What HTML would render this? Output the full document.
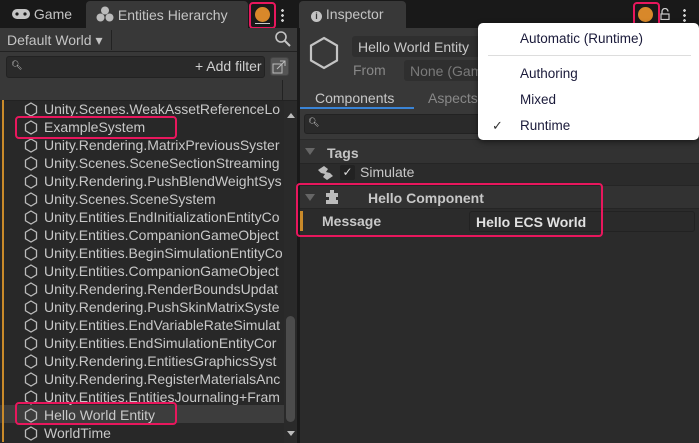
<!DOCTYPE html>
<html><head><meta charset="utf-8"><style>
*{box-sizing:border-box;margin:0;padding:0}
body{width:699px;height:443px;background:#191919;font-family:"Liberation Sans",sans-serif;position:relative;overflow:hidden;color:#c4c4c4;font-size:13px}
.a{position:absolute}
.row{position:absolute;left:0;width:284px;height:18px;line-height:18px;font-size:14px;color:#c8c8c8;white-space:nowrap;overflow:hidden}
.row .bar{position:absolute;left:2px;top:0;width:2px;height:18px;background:#c98a2a}
.row svg{position:absolute;left:24px;top:2px}
.row span{position:absolute;left:44px}
.red{position:absolute;border:2px solid #e8175d;border-radius:4px}
</style></head><body>
<!-- tab bar -->
<div class="a" style="left:0;top:0;width:699px;height:28px;background:#191919"></div>
<div class="a" style="left:12px;top:6px;font-size:14px;color:#c4c4c4">
<svg width="18" height="12" style="vertical-align:-1px" viewBox="0 0 18 12"><rect x="0" y="1" width="18" height="10" rx="5" fill="#c4c4c4"/><circle cx="5" cy="6" r="1.6" fill="#191919"/><circle cx="13" cy="6" r="1.6" fill="#191919"/></svg> Game</div>
<div class="a" style="left:86px;top:1px;width:162px;height:27px;background:#383838;border-radius:4px 4px 0 0"></div>
<div class="a" style="left:96px;top:6px;font-size:14px;color:#c4c4c4"><svg width="18" height="16" style="vertical-align:-2px" viewBox="0 0 18 16"><circle cx="9" cy="4.5" r="4" fill="#bbb"/><circle cx="4.5" cy="11.5" r="4" fill="#bbb"/><circle cx="13.5" cy="11.5" r="4" fill="#bbb"/></svg> Entities Hierarchy</div>
<div class="red" style="left:249px;top:2px;width:27px;height:27px"></div>
<div class="a" style="left:255px;top:7px;width:15px;height:15px;border-radius:50%;background:#d8882a"></div>
<div class="a" style="left:255px;top:23px;width:15px;height:1px;background:#ccc"></div>
<div class="a" style="left:281px;top:8px;width:3px;height:14px;background:radial-gradient(circle,#ccc 1.3px,transparent 1.5px) 0 0/3px 5px"></div>
<!-- left panel -->
<div class="a" style="left:0;top:28px;width:297px;height:415px;background:#282828"></div>
<div class="a" style="left:0;top:28px;width:297px;height:24px;background:#383838;border-bottom:1px solid #222"></div>
<div class="a" style="left:7px;top:32px;font-size:14px;color:#c4c4c4">Default World ▾</div>
<div class="a" style="left:111px;top:30px;width:1px;height:20px;background:#222"></div>
<svg class="a" style="left:274px;top:30px" width="18" height="18" viewBox="0 0 18 18"><circle cx="7" cy="7" r="5" fill="none" stroke="#c4c4c4" stroke-width="1.6"/><path d="M11 11l5 5" stroke="#c4c4c4" stroke-width="2"/></svg>
<div class="a" style="left:0;top:52px;width:297px;height:48px;background:#383838"></div>
<div class="a" style="left:6px;top:56px;width:259px;height:22px;background:#2a2a2a;border:1px solid #222;border-radius:3px"></div>
<div class="a" style="left:11px;top:60px;font-size:9px;color:#ccc">🔍︎</div>
<div class="a" style="left:195px;top:58px;font-size:14px;color:#d0d0d0">+ Add filter</div>
<div class="a" style="left:270px;top:57px;width:19px;height:19px;background:#555;border-radius:3px;border:1px solid #444"></div>
<svg class="a" style="left:272px;top:59px" width="15" height="15" viewBox="0 0 15 15"><rect x="1" y="5" width="9" height="9" fill="none" stroke="#bbb"/><path d="M5 10L13 2M8 2h5v5" fill="none" stroke="#bbb"/></svg>
<div class="a" style="left:282px;top:80px;width:1px;height:20px;background:#222"></div>
<div class="a" style="left:0;top:100px;width:297px;height:1px;background:#222"></div>
<div class="a" style="left:0;top:405px;width:284px;height:18px;background:#3d3d3d"></div>
<!-- rows -->
<div id="rows"></div>
<!-- scrollbar -->
<div class="a" style="left:284px;top:101px;width:13px;height:342px;background:#2a2a2a"></div>
<div class="a" style="left:286px;top:316px;width:9px;height:106px;background:#4c4c4c;border-radius:5px"></div>
<div class="a" style="left:287px;top:113px;width:0;height:0;border-left:4px solid transparent;border-right:4px solid transparent;border-bottom:5px solid #bbb"></div>
<div class="a" style="left:287px;top:431px;width:0;height:0;border-left:4px solid transparent;border-right:4px solid transparent;border-top:5px solid #bbb"></div>
<div class="a" style="left:297px;top:28px;width:3px;height:415px;background:#191919"></div>
<!-- inspector -->
<div class="a" style="left:299px;top:1px;width:107px;height:27px;background:#383838;border-radius:4px 4px 0 0"></div>
<div class="a" style="left:311px;top:6px;font-size:14px;color:#c4c4c4"><span style="display:inline-block;width:11px;height:11px;border-radius:50%;background:#c4c4c4;color:#383838;font-size:9px;font-weight:bold;text-align:center;line-height:11px;vertical-align:0">i</span> Inspector</div>
<div class="red" style="left:633px;top:2px;width:27px;height:26px"></div>
<div class="a" style="left:638px;top:7px;width:15px;height:15px;border-radius:50%;background:#d8882a"></div>
<div class="a" style="left:638px;top:23px;width:15px;height:1px;background:#ccc"></div>
<svg class="a" style="left:660px;top:8px" width="10" height="12" viewBox="0 0 10 12"><path d="M2 6V3.5a3 3 0 0 1 6 0" fill="none" stroke="#ccc" stroke-width="1.3"/><rect x="1" y="6" width="8" height="5.5" fill="none" stroke="#ccc" stroke-width="1.2"/></svg>
<div class="a" style="left:683px;top:8px;width:3px;height:14px;background:radial-gradient(circle,#ccc 1.3px,transparent 1.5px) 0 0/3px 5px"></div>
<div class="a" style="left:300px;top:28px;width:399px;height:415px;background:#2b2b2b"></div>
<div class="a" style="left:300px;top:28px;width:399px;height:84px;background:#383838"></div>
<svg class="a" style="left:308px;top:36px" width="32" height="34" viewBox="0 0 32 34"><path d="M16 2L29 9.5V24.5L16 32L3 24.5V9.5Z" fill="none" stroke="#c4c4c4" stroke-width="2.2"/></svg>
<div class="a" style="left:352px;top:36px;width:130px;height:21px;background:#2f2f2f;border-radius:3px;padding:3px 6px;font-size:14px;color:#c8c8c8">Hello World Entity</div>
<div class="a" style="left:353px;top:62px;font-size:14px;color:#888">From</div>
<div class="a" style="left:404px;top:60px;width:80px;height:21px;background:#2f2f2f;border-radius:3px;padding:3px 6px;font-size:14px;color:#7a7a7a;overflow:hidden;white-space:nowrap">None (Game</div>
<div class="a" style="left:315px;top:90px;font-size:14px;color:#c8c8c8">Components</div>
<div class="a" style="left:428px;top:90px;font-size:14px;color:#888">Aspects</div>
<div class="a" style="left:300px;top:107px;width:114px;height:2px;background:#3a84d6"></div>
<div class="a" style="left:300px;top:109px;width:399px;height:30px;background:#383838"></div>
<div class="a" style="left:304px;top:114px;width:390px;height:20px;background:#2a2a2a;border:1px solid #222;border-radius:3px"></div>
<div class="a" style="left:308px;top:117px;font-size:9px;color:#ccc">🔍︎</div>
<div class="a" style="left:300px;top:140px;width:399px;height:24px;background:#323232;border-bottom:1px solid #252525"></div>
<div class="a" style="left:305px;top:148px;width:0;height:0;border-left:5px solid transparent;border-right:5px solid transparent;border-top:7px solid #666"></div>
<div class="a" style="left:327px;top:145px;font-size:14px;font-weight:bold;color:#c4c4c4">Tags</div>
<svg class="a" style="left:317px;top:165px" width="17" height="15" viewBox="0 0 17 15"><path d="M1 5l6-4 4 3-2 3 4 1 3 3-6 4-4-3 2-3-4-1z" fill="#bbb"/></svg>
<div class="a" style="left:340px;top:165px;width:15px;height:15px;background:#222;border-radius:2px;color:#ddd;font-size:12px;text-align:center;line-height:15px">✓</div>
<div class="a" style="left:360px;top:164px;font-size:14px;color:#c8c8c8">Simulate</div>
<div class="a" style="left:300px;top:185px;width:399px;height:24px;background:#323232;border-top:1px solid #252525;border-bottom:1px solid #252525"></div>
<div class="a" style="left:305px;top:194px;width:0;height:0;border-left:5px solid transparent;border-right:5px solid transparent;border-top:7px solid #666"></div>
<svg class="a" style="left:324px;top:189px" width="16" height="16" viewBox="0 0 16 16"><path d="M2 4h4V1h4v3h4v4h-2v3h2v4H2v-4h3V8H2z" fill="#bbb"/></svg>
<div class="a" style="left:368px;top:190px;font-size:14px;font-weight:bold;color:#c8c8c8">Hello Component</div>
<div class="a" style="left:300px;top:211px;width:3px;height:20px;background:#c98a2a"></div>
<div class="a" style="left:322px;top:213px;font-size:14px;font-weight:bold;color:#c8c8c8">Message</div>
<div class="a" style="left:469px;top:211px;width:226px;height:21px;background:#2a2a2a;border:1px solid #222;border-radius:3px;padding:2px 6px;font-size:14px;font-weight:bold;color:#e0e0e0">Hello ECS World</div>
<div class="red" style="left:296px;top:183px;width:307px;height:54px"></div>
<!-- dropdown -->
<div class="a" style="left:478px;top:23px;width:221px;height:117px;background:#fff;border-radius:5px;box-shadow:0 2px 6px rgba(0,0,0,.5)"></div>
<div class="a" style="left:520px;top:31px;font-size:13.5px;color:#1a1a3a">Automatic (Runtime)</div>
<div class="a" style="left:488px;top:55px;width:203px;height:1px;background:#ddd"></div>
<div class="a" style="left:520px;top:66px;font-size:13.5px;color:#1a1a3a">Authoring</div>
<div class="a" style="left:520px;top:92px;font-size:13.5px;color:#1a1a3a">Mixed</div>
<div class="a" style="left:492px;top:118px;font-size:13px;color:#333">✓</div>
<div class="a" style="left:520px;top:118px;font-size:13.5px;color:#1a1a3a">Runtime</div>
<div class="red" style="left:15px;top:116px;width:162px;height:23px"></div>
<div class="red" style="left:15px;top:402px;width:162px;height:23px"></div>
<script>
var n=["Unity.Scenes.WeakAssetReferenceLo","ExampleSystem","Unity.Rendering.MatrixPreviousSyster","Unity.Scenes.SceneSectionStreaming","Unity.Rendering.PushBlendWeightSys","Unity.Scenes.SceneSystem","Unity.Entities.EndInitializationEntityCo","Unity.Entities.CompanionGameObject","Unity.Entities.BeginSimulationEntityCo","Unity.Entities.CompanionGameObject","Unity.Rendering.RenderBoundsUpdat","Unity.Rendering.PushSkinMatrixSyste","Unity.Entities.EndVariableRateSimulat","Unity.Entities.EndSimulationEntityCor","Unity.Rendering.EntitiesGraphicsSyst","Unity.Rendering.RegisterMaterialsAnc","Unity.Entities.EntitiesJournaling+Fram","Hello World Entity","WorldTime"];
var h="";for(var i=0;i<n.length;i++){var y=100+i*18;h+='<div class="row" style="top:'+y+'px"><div class="bar"></div><svg width="14" height="15" viewBox="0 0 14 15"><path d="M7 1L12.5 4.2V10.8L7 14L1.5 10.8V4.2Z" fill="none" stroke="#bbb" stroke-width="1.3"/></svg><span>'+n[i]+'</span></div>';}
document.getElementById("rows").innerHTML=h;
</script>
</body></html>
